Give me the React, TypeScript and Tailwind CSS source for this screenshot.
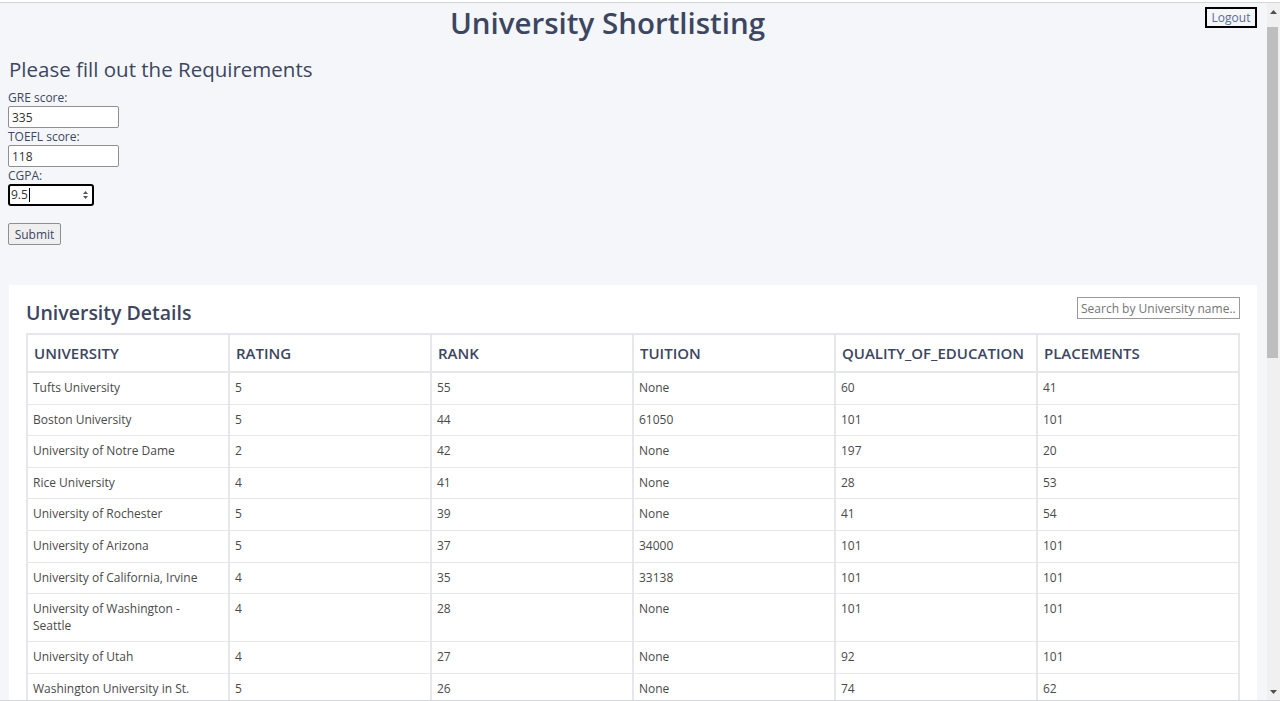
import { useState } from 'react';

type Uni = {
  name: string;
  rating: string;
  rank: string;
  tuition: string;
  quality: string;
  placements: string;
};

const UNIVERSITIES: Uni[] = [
  { name: 'Tufts University', rating: '5', rank: '55', tuition: 'None', quality: '60', placements: '41' },
  { name: 'Boston University', rating: '5', rank: '44', tuition: '61050', quality: '101', placements: '101' },
  { name: 'University of Notre Dame', rating: '2', rank: '42', tuition: 'None', quality: '197', placements: '20' },
  { name: 'Rice University', rating: '4', rank: '41', tuition: 'None', quality: '28', placements: '53' },
  { name: 'University of Rochester', rating: '5', rank: '39', tuition: 'None', quality: '41', placements: '54' },
  { name: 'University of Arizona', rating: '5', rank: '37', tuition: '34000', quality: '101', placements: '101' },
  { name: 'University of California, Irvine', rating: '4', rank: '35', tuition: '33138', quality: '101', placements: '101' },
  { name: 'University of Washington - Seattle', rating: '4', rank: '28', tuition: 'None', quality: '101', placements: '101' },
  { name: 'University of Utah', rating: '4', rank: '27', tuition: 'None', quality: '92', placements: '101' },
  { name: 'Washington University in St. Louis', rating: '5', rank: '26', tuition: 'None', quality: '74', placements: '62' },
  { name: 'Northeastern University', rating: '4', rank: '25', tuition: 'None', quality: '101', placements: '101' },
];

const COLUMNS = ['UNIVERSITY', 'RATING', 'RANK', 'TUITION', 'QUALITY_OF_EDUCATION', 'PLACEMENTS'];

function Field({ label, value }: { label: string; value: string }) {
  return (
    <div className="flex flex-col items-start">
      <label className="text-[12px] leading-[17px] text-[#3d4660]">{label}</label>
      <input
        readOnly
        value={value}
        className="w-[111px] h-[22px] border border-[#8f8f8f] rounded-[2px] bg-white px-[3px] text-[12px] text-[#333] outline-none"
      />
    </div>
  );
}

function FakeScrollbar() {
  return (
    <div className="w-[13px] shrink-0 bg-[#f0f0f0] flex flex-col">
      <div className="h-[24px] flex items-start justify-center pt-[7px]">
        <svg width="7" height="4" viewBox="0 0 7 4"><path d="M3.5 0 L7 4 L0 4 Z" fill="#505050" /></svg>
      </div>
      <div className="w-[11px] h-[331px] bg-[#bebebe]" />
      <div className="flex-1" />
      <div className="h-[14px] flex items-start justify-center pt-[4px]">
        <svg width="7" height="4" viewBox="0 0 7 4"><path d="M0 0 L7 0 L3.5 4 Z" fill="#505050" /></svg>
      </div>
    </div>
  );
}

export default function App() {
  const [search, setSearch] = useState('');
  const rows = UNIVERSITIES.filter(u => u.name.toLowerCase().includes(search.toLowerCase()));

  return (
    <div
      className="h-[701px] w-[1280px] overflow-hidden flex flex-col bg-white"
      style={{ fontFamily: '"Open Sans", "Noto Sans", sans-serif' }}
    >
      <div className="h-[2px] bg-white" />
      <div className="flex-1 min-h-0 flex border-t border-b border-[#d4d6da]">
        <div className="flex-1 min-w-0 bg-[#f4f6fa] overflow-hidden">
          {/* Header */}
          <div className="flex items-start">
            <h1 className="flex-1 text-center pl-[10px] mt-[1px] text-[29.5px] leading-[37px] font-semibold text-[#3c4660]">
              University Shortlisting
            </h1>
            <button className="mt-[4px] mr-[10px] h-[21px] w-[52px] border-2 border-black bg-[#f4f6fa] text-[12px] leading-[17px] text-[#5b6b92]">
              Logout
            </button>
          </div>

          {/* Requirements form */}
          <div className="px-[8px] mt-[14px]">
            <h2 className="pl-[1px] text-[20.5px] leading-[28px] text-[#3c4660]">Please fill out the Requirements</h2>
            <div className="mt-[6px] flex flex-col">
              <Field label="GRE score:" value="335" />
              <Field label="TOEFL score:" value="118" />
              <div className="flex flex-col items-start">
                <label className="text-[12px] leading-[17px] text-[#3d4660]">CGPA:</label>
                <div className="w-[86px] h-[22px] border-2 border-black rounded-[3px] bg-white flex items-center pl-[1px] pr-[2px]">
                  <span className="text-[12px] text-[#333] leading-none">9.5</span>
                  <span className="w-px h-[14px] bg-black ml-px" />
                  <span className="flex-1" />
                  <span className="flex flex-col items-center gap-[2px] w-[9px]">
                    <svg width="5" height="3" viewBox="0 0 5 3"><path d="M2.5 0 L5 3 L0 3 Z" fill="#555" /></svg>
                    <svg width="5" height="3" viewBox="0 0 5 3"><path d="M0 0 L5 0 L2.5 3 Z" fill="#555" /></svg>
                  </span>
                </div>
              </div>
            </div>
            <button className="mt-[17px] h-[22px] w-[53px] border border-[#8f8f8f] rounded-[2px] bg-[#efefef] text-[12px] leading-[17px] text-[#3d4660]">
              Submit
            </button>
          </div>

          {/* University details card */}
          <div className="mt-[40px] ml-[9px] mr-[10px] bg-white px-[17px] pt-[12px]">
            <div className="flex items-start justify-between">
              <h3 className="mt-[1px] text-[19.5px] leading-[30px] font-semibold text-[#3c4660]">University Details</h3>
              <input
                value={search}
                onChange={e => setSearch(e.target.value)}
                placeholder="Search by University name.."
                className="w-[163px] h-[22px] border border-[#9a9a9a] px-[3px] text-[12px] text-[#333] placeholder:text-[#757575] outline-none"
              />
            </div>
            <table className="mt-[5px] w-full table-fixed border-collapse">
              <thead>
                <tr>
                  {COLUMNS.map(col => (
                    <th
                      key={col}
                      className="border-2 border-[#e6e7ea] px-[6px] py-[7px] text-left text-[15px] leading-[22px] font-semibold text-[#3c4660]"
                    >
                      {col}
                    </th>
                  ))}
                </tr>
              </thead>
              <tbody>
                {rows.map(u => (
                  <tr key={u.name}>
                    {[u.name, u.rating, u.rank, u.tuition, u.quality, u.placements].map((v, i) => (
                      <td
                        key={i}
                        className="border border-[#e6e7ea] border-l-2 border-r-2 px-[5px] py-[7px] align-top text-[12px] leading-[16.6px] text-[#4a4a4a]"
                      >
                        {i === 0 ? <span className="block pr-[20px]">{v}</span> : v}
                      </td>
                    ))}
                  </tr>
                ))}
              </tbody>
            </table>
          </div>
        </div>
        <FakeScrollbar />
      </div>
    </div>
  );
}
